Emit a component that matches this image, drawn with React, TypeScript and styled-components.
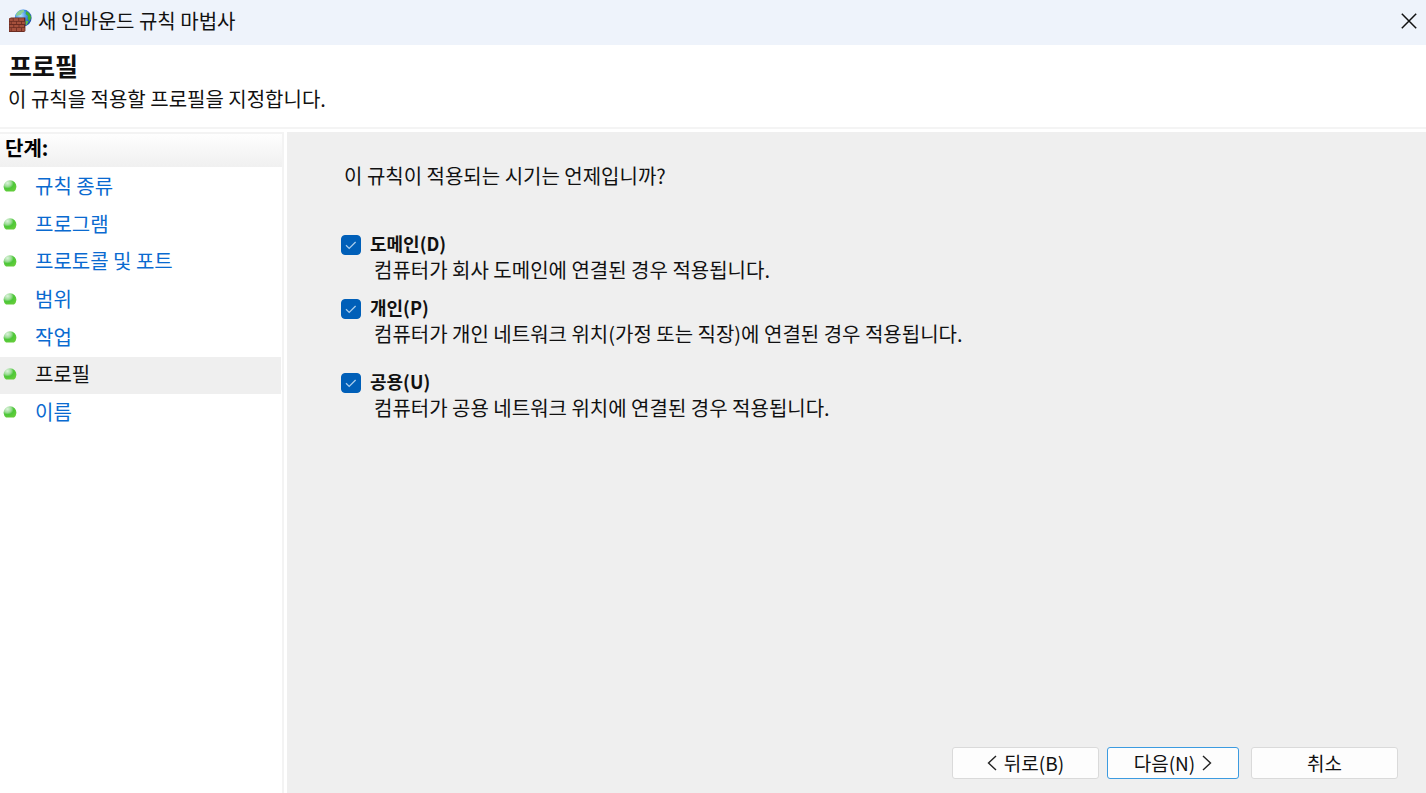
import React, { useState } from "react";
import styled, { createGlobalStyle } from "styled-components";

const GlobalStyle = createGlobalStyle`
  *, *::before, *::after { box-sizing: border-box; }
  html, body, #root { height: 100%; }
  body {
    margin: 0;
    background: #ffffff;
    color: #111111;
    font-family: "Noto Sans CJK KR", sans-serif;
    font-size: 20px;
    line-height: 24px;
  }
  button { font: inherit; color: inherit; }
`;

const Dialog = styled.div`
  min-height: 100%;
  display: flex;
  flex-direction: column;
`;

const TitleBar = styled.header`
  flex: none;
  height: 45px;
  display: flex;
  align-items: center;
  gap: 6px;
  padding: 0 8px 4px;
  background: #eef3fb;
`;

const AppIcon = styled.svg`
  flex: none;
  width: 24px;
  height: 24px;
`;

const WindowTitle = styled.span`
  flex: 1;
`;

const CloseButton = styled.button`
  width: 18px;
  height: 24px;
  padding: 0;
  border: 0;
  background: transparent;
  display: flex;
  align-items: center;
  justify-content: center;
`;

const PageHeader = styled.div`
  flex: none;
  height: 84px;
  padding: 4px 8px 0;
  border-bottom: 2px solid #f4f4f4;
`;

const Heading = styled.h1`
  margin: 0;
  padding-left: 1px;
  font-size: 25px;
  line-height: 32px;
  font-weight: 700;
`;

const Description = styled.p`
  margin: 6px 0 0;
`;

const Body = styled.div`
  flex: 1;
  display: flex;
  gap: 3px;
  padding-top: 3px;
`;

const Sidebar = styled.nav`
  flex: none;
  width: 284px;
  border-right: 2px solid #f3f3f3;
`;

const StepsTitle = styled.h2`
  margin: 0;
  height: 35px;
  padding: 2px 5px 0;
  border-top: 2px solid #f3f3f3;
  background: linear-gradient(#fefefe, #f0f0f0);
  color: #000000;
  font-size: 20px;
  line-height: 24px;
  font-weight: 700;
`;

const StepList = styled.ol`
  list-style: none;
  margin: 2px 0 0;
  padding: 0 1px 0 0;
  height: 263px;
  display: grid;
  grid-template-rows: repeat(7, 1fr);
`;

const Step = styled.li<{ $current?: boolean }>`
  display: flex;
  align-items: center;
  gap: 18px;
  padding: 0 0 3px 3px;
  background: ${(p) => (p.$current ? "#efefef" : "transparent")};
`;

const StepLink = styled.a<{ $current?: boolean }>`
  color: ${(p) => (p.$current ? "#111111" : "#0a6ad0")};
  text-decoration: none;
`;

const Content = styled.main`
  flex: 1;
  display: flex;
  flex-direction: column;
  background: #efefef;
  padding: 32px 28px 14px 54px;
`;

const Question = styled.p`
  margin: 0 0 44px 3px;
`;

const Options = styled.div`
  display: flex;
  flex-direction: column;
`;

const Option = styled.div<{ $gap?: number }>`
  display: grid;
  grid-template-columns: 20px 1fr;
  column-gap: 9px;
  align-items: center;
  margin-bottom: ${(p) => p.$gap ?? 0}px;
`;

const CheckBox = styled.input`
  appearance: none;
  width: 20px;
  height: 20px;
  margin: 0;
  border: 1px solid #005fb8;
  border-radius: 4px;
  background: #ffffff;
  &:checked {
    background: #005fb8
      url("data:image/svg+xml,%3Csvg xmlns='http://www.w3.org/2000/svg' viewBox='0 0 18 18'%3E%3Cpath d='M4 9.200l3.200 3.200L13.600 6' fill='none' stroke='%23a9cdec' stroke-width='1.300'/%3E%3C/svg%3E")
      center / 18px 18px no-repeat;
  }
`;

const OptionLabel = styled.label`
  padding-bottom: 4px;
  font-size: 18px;
  line-height: 22px;
  font-weight: 700;
`;

const OptionText = styled.p`
  grid-column: 2;
  margin: 0 0 0 4px;
`;

const Footer = styled.footer`
  margin-top: auto;
  display: flex;
  justify-content: flex-end;
`;

const FooterButton = styled.button<{ $primary?: boolean; $gap?: number }>`
  width: ${(p) => (p.$primary ? 132 : 147)}px;
  height: 32px;
  margin-left: ${(p) => p.$gap ?? 0}px;
  padding: 0;
  border: 1px solid ${(p) => (p.$primary ? "#3c9be0" : "#dadada")};
  border-radius: 3px;
  background: #fdfdfd;
  display: flex;
  align-items: center;
  justify-content: center;
  gap: 7px;
  font-size: 19px;
  line-height: 24px;
`;

const Chevron = ({ d }: { d: string }) => (
  <svg width="10" height="16" viewBox="0 0 10 16" fill="none" stroke="#222" strokeWidth="1.4" aria-hidden="true">
    <path d={d} />
  </svg>
);

const Bullet = () => (
  <svg width="14" height="14" viewBox="0 0 14 14" aria-hidden="true">
    <defs>
      <radialGradient id="orb" cx="0.3" cy="0.25" r="0.75">
        <stop offset="0" stopColor="#dcf3dc" />
        <stop offset="0.4" stopColor="#9cdc96" />
        <stop offset="0.65" stopColor="#4cc738" />
        <stop offset="1" stopColor="#62cc3a" />
      </radialGradient>
    </defs>
    <path d="M3 12.6a6.4 6.4 0 1 1 8 0z" fill="url(#orb)" />
  </svg>
);

const FirewallIcon = () => (
  <AppIcon viewBox="0 0 24 24" aria-hidden="true">
    <defs>
      <radialGradient id="globe" cx="0.35" cy="0.35" r="0.75">
        <stop offset="0" stopColor="#b4e2fa" />
        <stop offset="0.5" stopColor="#3a8be4" />
        <stop offset="1" stopColor="#1740a4" />
      </radialGradient>
    </defs>
    <circle cx="15.2" cy="9" r="8.4" fill="url(#globe)" />
    <path d="M8.200 5.200C9.500 2.400 12.500 1 15.500 1l1 1.400-2.600 1.600-1.200 2-2.800.2-1.600 1.600z" fill="#8ccf90" />
    <path d="M18.200 2.200c2.800 1.200 4.600 3.600 5 6.400l-1.600 4-2-3 .4-2.600-2.400-2z" fill="#3fae36" />
    <path d="M17.600 11.600l3 1-2 3.400h-1z" fill="#5cc24c" />
    <path d="M1 9.4l2-1h14.400v13.600l-1.200 1H1z" fill="#6b2c22" />
    <g fill="#a5503c">
      <path d="M1.600 9.600h3.200v2.300H1.600zM5.600 9.200h4.800v2.700H5.600zM11.200 9.200H16v2.700h-4.800z" />
      <path d="M1.600 12.700h1.200v2.400H1.600zM3.600 12.700H8v2.400H3.600zM8.800 12.700h4.400v2.400H8.800zM14 12.700h2.800v2.400H14z" />
      <path d="M1.600 15.900h3.800v2.400H1.600zM6.200 15.900h4.400v2.400H6.200zM11.400 15.900H16v2.400h-4.600z" />
      <path d="M1.600 19.100h1.200v2.800H1.600zM3.600 19.100H8v2.800H3.600zM8.800 19.100h4.400v2.800H8.800zM14 19.100h2.600v2.800H14z" />
    </g>
  </AppIcon>
);

const steps = ["규칙 종류", "프로그램", "프로토콜 및 포트", "범위", "작업", "프로필", "이름"];
const currentStep = "프로필";

const options = [
  { id: "domain", label: "도메인(D)", text: "컴퓨터가 회사 도메인에 연결된 경우 적용됩니다.", gap: 14 },
  { id: "private", label: "개인(P)", text: "컴퓨터가 개인 네트워크 위치(가정 또는 직장)에 연결된 경우 적용됩니다.", gap: 24 },
  { id: "public", label: "공용(U)", text: "컴퓨터가 공용 네트워크 위치에 연결된 경우 적용됩니다.", gap: 0 },
];

export default function App() {
  const [checked, setChecked] = useState<Record<string, boolean>>({ domain: true, private: true, public: true });

  return (
    <>
      <GlobalStyle />
      <Dialog>
        <TitleBar>
          <FirewallIcon />
          <WindowTitle>새 인바운드 규칙 마법사</WindowTitle>
          <CloseButton type="button" aria-label="닫기">
            <svg width="16" height="16" viewBox="0 0 16 16" stroke="#111" strokeWidth="1.5" aria-hidden="true">
              <path d="M.8 .8l14.4 14.4M15.2 .8L.8 15.2" />
            </svg>
          </CloseButton>
        </TitleBar>
        <PageHeader>
          <Heading>프로필</Heading>
          <Description>이 규칙을 적용할 프로필을 지정합니다.</Description>
        </PageHeader>
        <Body>
          <Sidebar>
            <StepsTitle>단계:</StepsTitle>
            <StepList>
              {steps.map((step) => (
                <Step key={step} $current={step === currentStep}>
                  <Bullet />
                  <StepLink href="#" $current={step === currentStep} aria-current={step === currentStep ? "step" : undefined}>
                    {step}
                  </StepLink>
                </Step>
              ))}
            </StepList>
          </Sidebar>
          <Content>
            <Question>이 규칙이 적용되는 시기는 언제입니까?</Question>
            <Options>
              {options.map((o) => (
                <Option key={o.id} $gap={o.gap}>
                  <CheckBox
                    type="checkbox"
                    id={o.id}
                    checked={checked[o.id]}
                    onChange={(e) => setChecked({ ...checked, [o.id]: e.target.checked })}
                  />
                  <OptionLabel htmlFor={o.id}>{o.label}</OptionLabel>
                  <OptionText>{o.text}</OptionText>
                </Option>
              ))}
            </Options>
            <Footer>
              <FooterButton type="button">
                <Chevron d="M9 1L1.5 8L9 15" />
                뒤로(B)
              </FooterButton>
              <FooterButton type="button" $primary $gap={8}>
                다음(N)
                <Chevron d="M1 1L8.5 8L1 15" />
              </FooterButton>
              <FooterButton type="button" $gap={12}>취소</FooterButton>
            </Footer>
          </Content>
        </Body>
      </Dialog>
    </>
  );
}
